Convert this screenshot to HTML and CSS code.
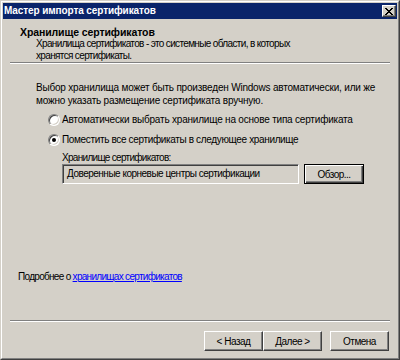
FILE: index.html
```html
<!DOCTYPE html>
<html lang="ru">
<head>
<meta charset="utf-8">
<title>Мастер импорта сертификатов</title>
<link rel="stylesheet" href="styles.css">
</head>
<body>
<div class="window">
  <div class="frame">
    <div class="titlebar">
      <span class="title">Мастер импорта сертификатов</span>
      <span class="close"><svg width="8" height="7" viewBox="0 0 8 7"><path d="M0 0h2v1h-2zM6 0h2v1h-2zM1 1h2v1h-2zM5 1h2v1h-2zM2 2h4v1h-4zM3 3h2v1h-2zM2 4h4v1h-4zM1 5h2v1h-2zM5 5h2v1h-2zM0 6h2v1h-2zM6 6h2v1h-2z" fill="#000"/></svg></span>
    </div>
    <div class="header">
      <div class="h-title">Хранилище сертификатов</div>
      <div class="h-sub">Хранилища сертификатов - это системные области, в которых<br>хранятся сертификаты.</div>
    </div>
    <div class="sep"></div>
    <div class="content">
      <p class="intro">Выбор хранилища может быть произведен Windows автоматически, или же<br>можно указать размещение сертификата вручную.</p>
      <div class="radio-row first"><span class="radio"></span><span>Автоматически выбрать хранилище на основе типа сертификата</span></div>
      <div class="radio-row second"><span class="radio checked"></span><span>Поместить все сертификаты в следующее хранилище</span></div>
      <div class="store">
        <div class="label">Хранилище сертификатов:</div>
        <div class="store-row">
          <div class="field">Доверенные корневые центры сертификации</div>
          <div class="btn browse"><span class="btn-in">Обзор...</span></div>
        </div>
      </div>
      <div class="more">Подробнее о <a class="link">хранилищах сертификатов</a></div>
    </div>
    <div class="sep"></div>
    <div class="footer">
      <div class="btn"><span class="btn-in">&lt; Назад</span></div>
      <div class="btn"><span class="btn-in">Далее &gt;</span></div>
      <div class="btn cancel"><span class="btn-in">Отмена</span></div>
    </div>
  </div>
</div>
</body>
</html>
```
FILE: styles.css
```css
html, body {
  margin: 0;
  padding: 0;
  background: #d4d0c8;
}
body {
  font-family: "Liberation Sans", Arial, sans-serif;
  font-size: 10px;
  letter-spacing: -0.5px;
  line-height: 13px;
  color: #000;
}
.window {
  width: 400px;
  height: 360px;
  box-sizing: border-box;
  border: 1px solid;
  border-color: #d4d0c8 #404040 #404040 #d4d0c8;
  background: #d4d0c8;
}
.frame {
  height: 100%;
  box-sizing: border-box;
  border: 1px solid;
  border-color: #fff #808080 #808080 #fff;
  padding: 1px;
  display: flex;
  flex-direction: column;
}
.titlebar {
  height: 16px;
  background: #0a246a;
  color: #fff;
  display: flex;
  align-items: center;
  justify-content: space-between;
  padding: 0 1px 0 1px;
}
.title {
  font-weight: bold;
  font-size: 10px;
  letter-spacing: -0.1px;
  line-height: 14px;
}
.close {
  width: 14px;
  height: 12px;
  box-sizing: border-box;
  background: #d4d0c8;
  border: 1px solid;
  border-color: #fff #404040 #404040 #fff;
  box-shadow: inset -1px -1px #808080;
  display: flex;
  align-items: center;
  justify-content: center;
}
.close svg { display: block; margin-left: -1px; }
.header {
  padding: 7px 0 0 17px;
}
.h-title {
  font-weight: bold;
  font-size: 10.5px;
  letter-spacing: -0.1px;
  line-height: 12px;
}
.h-sub {
  line-height: 12px;
  padding-left: 16px;
  letter-spacing: -0.65px;
}
.sep {
  margin: 0 7px;
  border-top: 1px solid #808080;
  border-bottom: 1px solid #fff;
  height: 0;
}
.content {
  flex: 1;
  display: flex;
  flex-direction: column;
  padding: 17px 0 37px 0;
}
.intro {
  margin: 0 0 0 33px;
  letter-spacing: -0.2px;
}
.radio-row {
  display: flex;
  align-items: center;
  gap: 2px;
  margin-left: 45px;
  height: 13px;
}
.radio-row.first { margin-top: 6px; letter-spacing: -0.2px; }
.radio-row.second { margin-top: 7px; letter-spacing: -0.35px; }
.radio {
  width: 12px;
  height: 12px;
  box-sizing: border-box;
  border-radius: 50%;
  background: #fff;
  border: 1px solid;
  border-color: #808080 #fff #fff #808080;
  box-shadow: inset 1px 1px #404040, inset -1px -1px #d4d0c8;
  position: relative;
}
.radio.checked::after {
  content: "";
  position: absolute;
  left: 3px;
  top: 3px;
  width: 4px;
  height: 4px;
  border-radius: 50%;
  background: #000;
}
.store {
  margin: 5px 0 0 59px;
}
.label {
  letter-spacing: -0.7px;
}
.store-row {
  display: flex;
  gap: 5px;
}
.field {
  width: 237px;
  height: 20px;
  box-sizing: border-box;
  border: 1px solid;
  border-color: #808080 #fff #fff #808080;
  box-shadow: inset 1px 1px #404040, inset -1px -1px #d4d0c8;
  padding: 0 4px;
  line-height: 18px;
  white-space: nowrap;
  overflow: hidden;
}
.btn {
  width: 59px;
  height: 20px;
  box-sizing: border-box;
  border: 1px solid;
  border-color: #fff #404040 #404040 #fff;
  box-shadow: inset -1px -1px #808080;
  display: flex;
  align-items: center;
  justify-content: center;
}
.browse {
  width: 60px;
  border-color: #000;
  box-shadow: inset 1px 1px #fff, inset -1px -1px #404040, inset -2px -2px #808080;
}
.btn-in {
  line-height: 13px;
  white-space: nowrap;
}
.more {
  margin: auto 0 0 15px;
  letter-spacing: -0.7px;
}
.link {
  color: #0000ff;
  text-decoration: underline;
  cursor: pointer;
}
.footer {
  display: flex;
  justify-content: flex-end;
  padding: 9px 8px 6px 0;
}
.footer .cancel {
  margin-left: 8px;
}
```
